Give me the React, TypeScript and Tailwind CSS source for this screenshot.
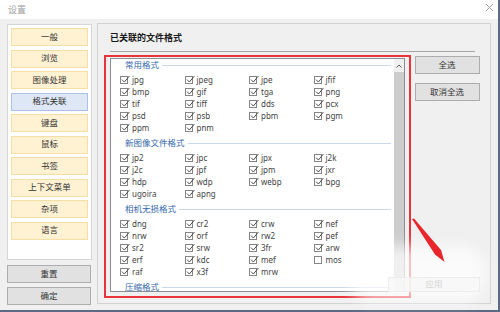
import React from 'react';

const FONT = "font-['Noto_Sans','Noto_Sans_CJK_SC',sans-serif]";

type Item = { n: string; off?: boolean };
const sections: { title: string; items: Item[] }[] = [
  {
    title: '常用格式',
    items: ['jpg', 'jpeg', 'jpe', 'jfif', 'bmp', 'gif', 'tga', 'png', 'tif', 'tiff', 'dds', 'pcx', 'psd', 'psb', 'pbm', 'pgm', 'ppm', 'pnm'].map((n) => ({ n })),
  },
  {
    title: '新图像文件格式',
    items: ['jp2', 'jpc', 'jpx', 'j2k', 'j2c', 'jpf', 'jpm', 'jxr', 'hdp', 'wdp', 'webp', 'bpg', 'ugoira', 'apng'].map((n) => ({ n })),
  },
  {
    title: '相机无损格式',
    items: [
      ...['dng', 'cr2', 'crw', 'nef', 'nrw', 'orf', 'rw2', 'pef', 'sr2', 'srw', '3fr', 'arw', 'erf', 'kdc', 'mef'].map((n) => ({ n })),
      { n: 'mos', off: true },
      ...['raf', 'x3f', 'mrw'].map((n) => ({ n })),
    ],
  },
  { title: '压缩格式', items: [] },
];

const nav = ['一般', '浏览', '图像处理', '格式关联', '键盘', '鼠标', '书签', '上下文菜单', '杂项', '语言'];

function Check({ on }: { on: boolean }) {
  return (
    <span className="relative w-[8px] h-[8px] shrink-0 border border-[#858585] bg-white">
      {on && (
        <svg className="absolute left-[0px] top-[-2px]" width="9" height="9" viewBox="0 0 9 9">
          <path d="M1 4.6 L3.4 7 L8.4 1" fill="none" stroke="#4a4a4a" strokeWidth="1" />
        </svg>
      )}
    </span>
  );
}

export default function App() {
  return (
    <div className={`relative w-[500px] h-[312px] overflow-hidden bg-[#f0f0f0] ${FONT} text-[#2a2a2a]`}>
      {/* title bar */}
      <div className="h-[19px] bg-white flex items-center justify-between pl-[8px] pr-[6px]">
        <span className="text-[9px] text-[#a0a0a0] leading-none">设置</span>
        <svg width="9" height="9" viewBox="0 0 9 9" className="mt-[-4px]">
          <path d="M1 1 L8 8 M8 1 L1 8" stroke="#a0a0a0" strokeWidth="1" />
        </svg>
      </div>

      {/* body */}
      <div className="flex pt-[4px] pl-[7px]">
        {/* left column */}
        <div className="w-[85px] flex flex-col">
          <div className="mt-[1px] h-[236px] bg-white border border-[#d6d6d6] p-[3px] flex flex-col gap-[3.5px]">
            {nav.map((t) => (
              <div
                key={t}
                className={
                  t === '格式关联'
                    ? 'h-[18px] flex items-center justify-center text-[8.5px] leading-none bg-[#dde7f6] border border-[#a9c2e6] text-[#333]'
                    : 'h-[18px] flex items-center justify-center text-[8.5px] leading-none bg-[#fff2d3] border border-[#f6dea4] text-[#333]'
                }
              >
                {t}
              </div>
            ))}
          </div>
          <div className="mt-[5px] w-[84px] h-[18px] flex items-center justify-center text-[8.5px] leading-none bg-[#e1e1e1] border border-[#adadad] text-[#333]">
            重置
          </div>
          <div className="mt-[4px] w-[84px] h-[18px] flex items-center justify-center text-[8.5px] leading-none bg-[#e1e1e1] border border-[#adadad] text-[#333]">
            确定
          </div>
        </div>

        {/* right panel */}
        <div className="ml-[5px] w-[394px] h-[281px] border border-[#d2d2d2] flex flex-col">
          <div className="ml-[12px] mt-[7px] h-[13px] flex items-center text-[9px] font-bold leading-none text-[#1a1a1a]">
            已关联的文件格式
          </div>
          <div className="ml-[12px] mt-[7px] w-[365px] h-px bg-[#a5a5a5]" />
          <div className="flex mt-[2.5px] ml-[6px]">
            <div className="w-[307px] h-[243px] border-2 border-[#e8343a] pt-[1.5px] pl-[4px]">
              <div className="w-[295px] h-[234px] border border-[#8a8f96] bg-white flex overflow-hidden">
                <div className="flex-1 flex flex-col">
                  {sections.map((s) => (
                    <div key={s.title} className="flex flex-col">
                      <div className="h-[12px] flex items-center pl-[14px] pr-[3px]">
                        <span className="text-[8.5px] leading-none text-[#3568ab]">{s.title}</span>
                        <div className="flex-1 h-px ml-[3px] bg-[#c9d8ea]" />
                      </div>
                      {s.items.length > 0 && (
                        <div className="mt-[3px] mb-[3px] pl-[9px] grid grid-cols-[repeat(4,64.5px)]">
                          {s.items.map((it) => (
                            <div key={it.n} className="h-[12px] flex items-center">
                              <Check on={!it.off} />
                              <span className="ml-[4px] text-[8px] leading-none text-[#444]">{it.n}</span>
                            </div>
                          ))}
                        </div>
                      )}
                    </div>
                  ))}
                </div>
                {/* scrollbar */}
                <div className="w-[10px] flex flex-col">
                  <div className="h-[13px] bg-[#f0f0f0] flex items-center justify-center">
                    <svg width="6" height="4" viewBox="0 0 6 4">
                      <path d="M0.5 3.5 L3 1 L5.5 3.5" fill="none" stroke="#606060" strokeWidth="1" />
                    </svg>
                  </div>
                  <div className="flex-1 bg-[#cdcdcd]" />
                </div>
              </div>
            </div>
            <div className="ml-[3.5px] mt-[1.5px] flex flex-col">
              <div className="w-[65px] h-[18px] flex items-center justify-center text-[8.5px] leading-none bg-[#e1e1e1] border border-[#adadad] text-[#333]">
                全选
              </div>
              <div className="mt-[9px] w-[65px] h-[18px] flex items-center justify-center text-[8.5px] leading-none bg-[#e1e1e1] border border-[#adadad] text-[#333]">
                取消全选
              </div>
            </div>
          </div>
        </div>
      </div>

      {/* window frame edges */}
      <div className="absolute right-0 top-0 w-[2px] h-[312px] bg-[#5a6b83]" />
      <div className="absolute left-0 bottom-0 w-[500px] h-[2px] bg-[#5a6b83]" />

      {/* watermark ghost */}
      <div className="absolute left-[350px] top-[246px] w-[135px] h-[56px] rounded-[22px] bg-white/70 blur-[7px]" />
      <div className="absolute left-[388px] top-[277px] w-[92px] h-[15px] border border-[#ececec] bg-[#f7f7f7]/80 flex items-center justify-center text-[8.5px] text-[#d6d6d6]">
        应用
      </div>

      {/* red arrow annotation */}
      <svg className="absolute left-[405px] top-[215px]" width="50" height="55" viewBox="0 0 50 55">
        <path d="M7 4 L9 3.6 L36 35 L39.5 47 L30 39.5 Z" fill="#e8262b" />
      </svg>
    </div>
  );
}
